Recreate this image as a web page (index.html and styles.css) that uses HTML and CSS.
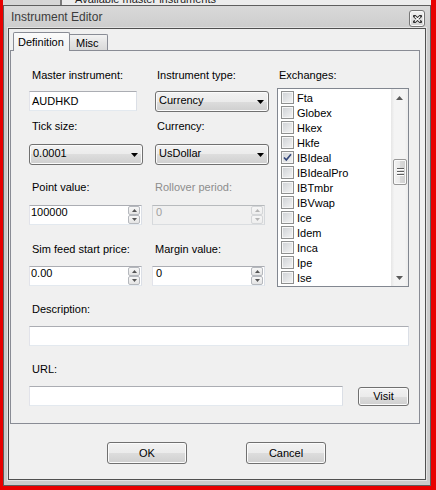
FILE: index.html
```html
<!DOCTYPE html>
<html>
<head>
<meta charset="utf-8">
<link rel="stylesheet" href="styles.css">
</head>
<body>
<div class="screen">
  <div class="bgapp">
    <div class="bgapp-left"></div>
    <span class="bgapp-text">Available master instruments</span>
  </div>
  <div class="window">
    <div class="titlebar">
      <span class="title">Instrument Editor</span>
      <div class="close">
        <svg width="9" height="8" viewBox="0 0 9 8"><path d="M1.5 1.2 L7.5 6.8 M7.5 1.2 L1.5 6.8" stroke="#2e2e2e" stroke-width="3" fill="none" stroke-linecap="round"/><path d="M1.8 1.5 L7.2 6.5 M7.2 1.5 L1.8 6.5" stroke="#ffffff" stroke-width="1.2" fill="none"/></svg>
      </div>
    </div>
    <div class="client">
      <div class="tabs">
        <div class="tab active">Definition</div>
        <div class="tab misc">Misc</div>
      </div>
      <div class="panel">
        <div class="top">
          <div class="lbl i3">Master instrument:</div>
          <div class="lbl i5">Instrument type:</div>
          <div class="textbox short">AUDHKD</div>
          <div class="combo c2">
            <span>Currency</span>
            <svg width="7" height="4" viewBox="0 0 7 4"><path d="M0 0 H7 L3.5 4 Z" fill="#000"/></svg>
          </div>
          <div class="lbl i3">Tick size:</div>
          <div class="lbl i5">Currency:</div>
          <div class="combo">
            <span>0.0001</span>
            <svg width="7" height="4" viewBox="0 0 7 4"><path d="M0 0 H7 L3.5 4 Z" fill="#000"/></svg>
          </div>
          <div class="combo c2">
            <span>UsDollar</span>
            <svg width="7" height="4" viewBox="0 0 7 4"><path d="M0 0 H7 L3.5 4 Z" fill="#000"/></svg>
          </div>
          <div class="lbl i3">Point value:</div>
          <div class="lbl i3 dis">Rollover period:</div>
          <div class="numeric">
            <span class="val">100000</span>
            <div class="spin">
              <span><svg width="5" height="3" viewBox="0 0 5 3"><path d="M0 3 L2.5 0 L5 3 Z" fill="#555"/></svg></span>
              <span><svg width="5" height="3" viewBox="0 0 5 3"><path d="M0 0 L2.5 3 L5 0 Z" fill="#555"/></svg></span>
            </div>
          </div>
          <div class="numeric n2 dis">
            <span class="val">0</span>
            <div class="spin">
              <span><svg width="5" height="3" viewBox="0 0 5 3"><path d="M0 3 L2.5 0 L5 3 Z" fill="#b4b4b4"/></svg></span>
              <span><svg width="5" height="3" viewBox="0 0 5 3"><path d="M0 0 L2.5 3 L5 0 Z" fill="#b4b4b4"/></svg></span>
            </div>
          </div>
          <div class="lbl i3">Sim feed start price:</div>
          <div class="lbl i3">Margin value:</div>
          <div class="numeric">
            <span class="val">0.00</span>
            <div class="spin">
              <span><svg width="5" height="3" viewBox="0 0 5 3"><path d="M0 3 L2.5 0 L5 3 Z" fill="#555"/></svg></span>
              <span><svg width="5" height="3" viewBox="0 0 5 3"><path d="M0 0 L2.5 3 L5 0 Z" fill="#555"/></svg></span>
            </div>
          </div>
          <div class="numeric n2">
            <span class="val">0</span>
            <div class="spin">
              <span><svg width="5" height="3" viewBox="0 0 5 3"><path d="M0 3 L2.5 0 L5 3 Z" fill="#555"/></svg></span>
              <span><svg width="5" height="3" viewBox="0 0 5 3"><path d="M0 0 L2.5 3 L5 0 Z" fill="#555"/></svg></span>
            </div>
          </div>

          <div class="exch">
            <div class="lbl i2">Exchanges:</div>
            <div class="listbox">
              <div class="items">
                <div class="item"><span class="cb"></span>Fta</div>
                <div class="item"><span class="cb"></span>Globex</div>
                <div class="item"><span class="cb"></span>Hkex</div>
                <div class="item"><span class="cb"></span>Hkfe</div>
                <div class="item"><span class="cb"><svg width="11" height="11" viewBox="0 0 11 11"><path d="M2 5.5 L4.3 8 L9 2.3" stroke="#34477a" stroke-width="1.7" fill="none"/></svg></span>IBIdeal</div>
                <div class="item"><span class="cb"></span>IBIdealPro</div>
                <div class="item"><span class="cb"></span>IBTmbr</div>
                <div class="item"><span class="cb"></span>IBVwap</div>
                <div class="item"><span class="cb"></span>Ice</div>
                <div class="item"><span class="cb"></span>Idem</div>
                <div class="item"><span class="cb"></span>Inca</div>
                <div class="item"><span class="cb"></span>Ipe</div>
                <div class="item"><span class="cb"></span>Ise</div>
              </div>
              <div class="scroll">
                <div class="sbtn"><svg width="7" height="4" viewBox="0 0 7 4"><path d="M0 4 L3.5 0 L7 4 Z" fill="#5a5a5a"/></svg></div>
                <div class="track">
                  <div class="thumb"><i></i><i></i><i></i></div>
                </div>
                <div class="sbtn"><svg width="7" height="4" viewBox="0 0 7 4"><path d="M0 0 L3.5 4 L7 0 Z" fill="#5a5a5a"/></svg></div>
              </div>
            </div>
          </div>
        </div>

        <div class="lbl i3 sect">Description:</div>
        <div class="textbox desc"></div>
        <div class="lbl i3 sect2">URL:</div>
        <div class="urlrow">
          <div class="textbox url"></div>
          <div class="btn visit">Visit</div>
        </div>
      </div>
      <div class="buttons">
        <div class="btn big">OK</div>
        <div class="btn big">Cancel</div>
      </div>
    </div>
  </div>
</div>
</body>
</html>
```
FILE: styles.css
```css
* { box-sizing: border-box; }
html, body { margin: 0; padding: 0; }
body {
  width: 436px;
  height: 490px;
  overflow: hidden;
  background: #e80000;
  font-family: "Liberation Sans", Arial, sans-serif;
  font-size: 11px;
  color: #000;
}
.screen { margin-left: 3px; width: 428px; }

.bgapp { height: 5px; display: flex; overflow: hidden; background: #ececec; }
.bgapp-left { flex: none; width: 59px; background: #d6d6d6; border-right: 2px solid #7a7a7a; }
.bgapp-text { margin: -7px 0 0 13px; line-height: 13px; white-space: nowrap; color: #1e1e1e; }

.window {
  width: 428px;
  height: 481px;
  border: 1px solid #5e5e5e;
  background: #cbcbcb;
  display: flex;
  flex-direction: column;
}
.titlebar {
  height: 22px;
  flex: none;
  display: flex;
  justify-content: space-between;
  align-items: flex-start;
  background: linear-gradient(#d9d9d9, #cdcdcd);
}
.title { padding-left: 7px; line-height: 22px; font-size: 12px; color: #3c3c3c; }
.close {
  margin: 4px 5px 0 0;
  width: 16px;
  height: 17px;
  border: 1px solid #767676;
  border-radius: 3px;
  background: linear-gradient(#f2f2f2, #d2d2d2);
  box-shadow: inset 0 0 0 1px #f8f8f8;
  display: flex;
  align-items: center;
  justify-content: center;
}
.close svg { display: block; }

.client {
  margin: 0 4px 5px;
  height: 452px;
  flex: none;
  border: 1px solid #505050;
  background: #f0f0f0;
  box-shadow: 0 0 0 1px #e4e4e4;
}

.tabs {
  display: flex;
  align-items: flex-end;
  height: 19px;
  margin: 3px 0 -1px 4px;
  position: relative;
  z-index: 1;
}
.tab { border: 1px solid #898c95; border-bottom: none; white-space: nowrap; }
.tab.active {
  width: 57px;
  height: 19px;
  padding-left: 4px;
  line-height: 18px;
  background: linear-gradient(#fbfbfb, #f0f0f0);
  border-radius: 2px 2px 0 0;
}
.tab.misc {
  width: 38px;
  height: 16px;
  margin-bottom: 1px;
  border-left: none;
  padding: 1px 0 0 6px;
  line-height: 14px;
  background: linear-gradient(#f3f3f3, #e4e4e4 50%, #d9d9d9);
  border-radius: 0 2px 0 0;
}

.panel {
  margin-left: 1px;
  width: 410px;
  height: 374px;
  border: 1px solid #898c95;
  background: #f0f0f0;
  padding: 18px 0 0 18px;
}

.top {
  display: grid;
  grid-template-columns: 123px 125px 132px;
  grid-template-rows: 22px 29px 24px 37px 24px 38px 23px 21px;
  align-items: start;
}
.lbl { line-height: 13px; white-space: nowrap; }
.lbl.i2 { padding-left: 2px; }
.lbl.i3 { padding-left: 3px; }
.lbl.i5 { padding-left: 5px; }
.lbl.dis { color: #8d8d8d; }

.textbox {
  height: 20px;
  background: #fff;
  border: 1px solid;
  border-color: #abadb3 #dbdfe6 #e3e9ef #e2e3ea;
  padding: 3px 0 0 2px;
  line-height: 13px;
}
.textbox.short { width: 108px; }

.combo {
  width: 114px;
  height: 21px;
  border: 1px solid #707070;
  border-radius: 3px;
  background: linear-gradient(#f2f2f2, #ebebeb 50%, #dddddd 50%, #cfcfcf);
  box-shadow: inset 0 0 0 1px #fbfbfb;
  display: flex;
  justify-content: space-between;
  align-items: flex-start;
  padding: 2px 4px 0 3px;
  line-height: 13px;
}
.combo svg { margin-top: 6px; display: block; }
.combo.c2 { margin-left: 3px; }

.numeric {
  width: 113px;
  height: 20px;
  display: flex;
  background: #fff;
  border: 1px solid;
  border-color: #abadb3 #dbdfe6 #e3e9ef #e2e3ea;
}
.numeric .val { flex: 1; line-height: 13px; padding-left: 1px; }
.numeric.n2 .val { padding-left: 3px; }
.spin { width: 12px; margin-right: 1px; display: flex; flex-direction: column; }
.spin span {
  flex: 1;
  border: 1px solid #b5b8bd;
  border-radius: 2px;
  background: linear-gradient(#f7f7f7, #e4e4e4);
  display: flex;
  align-items: center;
  justify-content: center;
}
.spin svg { display: block; }
.numeric.dis { background: #f0f0f0; border-color: #b7babd #d5d8db #dadde0 #d5d8db; }
.numeric.dis .val { color: #a0a0a0; }
.numeric.dis .spin span { border-color: #d4d6d8; background: linear-gradient(#f6f6f6, #eeeeee); }

.exch {
  grid-column: 3;
  grid-row: 1 / -1;
  display: flex;
  flex-direction: column;
}
.listbox {
  margin-top: 6px;
  width: 132px;
  height: 199px;
  border: 1px solid #828790;
  background: #fff;
  display: flex;
}
.items { flex: 1; padding: 1px 0 0 3px; overflow: hidden; }
.item { height: 15px; display: flex; align-items: center; white-space: nowrap; }
.cb {
  flex: none;
  width: 13px;
  height: 13px;
  margin-right: 3px;
  border: 1px solid #8e8f8f;
  background: linear-gradient(135deg, #cdd0d4, #f5f5f5);
  box-shadow: inset 0 0 0 1px #f6f6f6;
  display: flex;
  align-items: center;
  justify-content: center;
}
.cb svg { display: block; }

.scroll {
  flex: none;
  width: 17px;
  display: flex;
  flex-direction: column;
  background: linear-gradient(90deg, #e6e6e6, #f4f4f4 20%, #f4f4f4 80%, #ececec);
}
.sbtn { height: 17px; flex: none; display: flex; align-items: center; justify-content: center; }
.sbtn svg { display: block; }
.track { flex: 1; padding: 53px 0 0 2px; }
.thumb {
  width: 14px;
  height: 26px;
  border: 1px solid #979797;
  border-radius: 2px;
  background: linear-gradient(90deg, #f3f3f3, #e8e8e8 50%, #d9d9d9 50%, #d0d0d0);
  box-shadow: inset 0 0 0 1px #fafafa;
  display: flex;
  flex-direction: column;
  align-items: center;
  justify-content: center;
  gap: 1px;
}
.thumb i {
  display: block;
  width: 7px;
  height: 1px;
  background: #5e5e5e;
  box-shadow: 0 1px 0 #ffffff;
  margin-bottom: 1px;
}

.lbl.sect { margin-top: 16px; }
.textbox.desc { margin-top: 10px; width: 380px; }
.lbl.sect2 { margin-top: 17px; }
.urlrow { display: flex; align-items: flex-start; margin-top: 10px; }
.textbox.url { width: 314px; }

.btn {
  border: 1px solid #707070;
  border-radius: 3px;
  background: linear-gradient(#f2f2f2, #ebebeb 50%, #dddddd 50%, #cfcfcf);
  box-shadow: inset 0 0 0 1px #fbfbfb;
  display: flex;
  align-items: center;
  justify-content: center;
  line-height: 13px;
}
.btn.visit { width: 51px; height: 19px; margin: 1px 0 0 15px; }
.buttons { display: flex; justify-content: center; gap: 59px; margin-top: 18px; padding-right: 1px; }
.btn.big { width: 80px; height: 22px; }
```
